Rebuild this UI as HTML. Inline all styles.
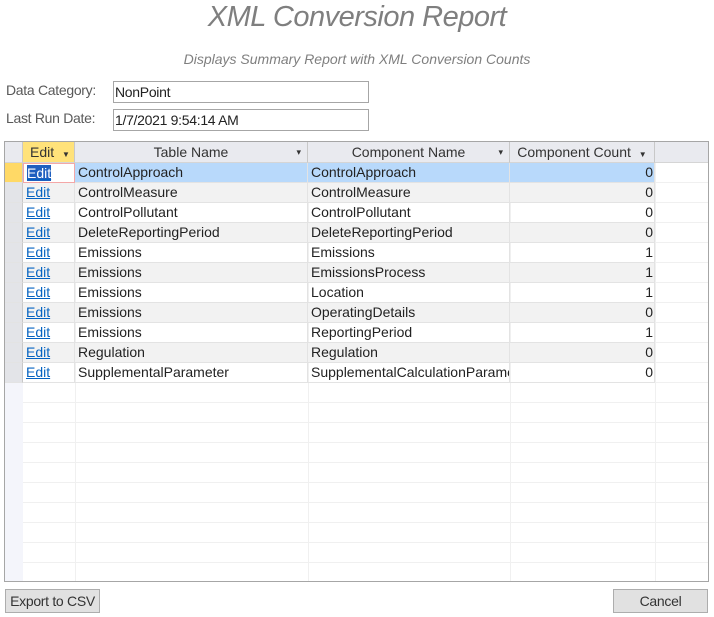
<!DOCTYPE html>
<html><head><meta charset="utf-8"><style>
body{margin:0;width:714px;height:617px;background:#fff;font-family:"Liberation Sans",sans-serif;position:relative;overflow:hidden;color:#222}
.a{position:absolute}
.title{left:0;width:714px;top:1px;text-align:center;font-size:29px;font-style:italic;color:#7f7f7f;letter-spacing:-0.5px}
.sub{left:0;width:714px;top:51px;text-align:center;font-size:14px;font-style:italic;color:#7f7f7f;letter-spacing:0}
.lbl{left:6px;font-size:14px;color:#595959;letter-spacing:-0.3px}
.inp{left:113px;width:256px;height:22px;border:1px solid #a6a6a6;font-size:14px;line-height:20px;padding-left:1px;box-sizing:border-box;letter-spacing:-0.3px}
.grid{left:4px;top:141px;width:705px;height:441px;border:1px solid #a6a6a6;box-sizing:border-box;
background:linear-gradient(#f4f5fb,#f4f5fb) 0 0/18px 100% no-repeat,repeating-linear-gradient(#fff 0 19px,#f0f0f0 19px 20px) 0 1px;overflow:hidden}
.hdr{top:0;height:21px;background:#e9eaef;border-bottom:1px solid #d5d5d5;box-sizing:border-box;font-size:14px;color:#333;line-height:20px;text-align:center;border-right:1px solid #c8c8c8}
.row{position:absolute;left:0;width:650px;height:20px;font-size:14px;line-height:19px}
.c{position:absolute;top:0;height:20px;border-right:1px solid #e3e3e3;border-bottom:1px solid #e3e3e3;box-sizing:border-box;padding-left:3px;white-space:nowrap;overflow:hidden;letter-spacing:0}
.s{left:0;width:18px;background:#e3e4e8;border-right:1px solid #c8c8c8}
.e{left:18px;width:52px;color:#0563c1;text-decoration:underline}
.t{left:70px;width:233px}
.n{left:303px;width:202px}
.k{left:505px;width:145px;text-align:right;padding-right:1px}
.g .c{background:#f2f2f2}
.g .s{background:#e3e4e8}
.vl{top:0;width:1px;height:440px;background:#f0f0f0}
.btn{top:589px;height:24px;border:1px solid #adadad;background:#e1e1e1;box-sizing:border-box;font-size:14px;line-height:22px;text-align:center;color:#333;letter-spacing:-0.3px}
</style></head><body>
<div class="a title">XML Conversion Report</div>
<div class="a sub">Displays Summary Report with XML Conversion Counts</div>
<div class="a lbl" style="top:82px">Data Category:</div>
<div class="a inp" style="top:81px">NonPoint</div>
<div class="a lbl" style="top:110px">Last Run Date:</div>
<div class="a inp" style="top:109px">1/7/2021 9:54:14 AM</div>
<div class="a grid">
<div class="a vl" style="left:70px"></div><div class="a vl" style="left:303px"></div><div class="a vl" style="left:505px"></div><div class="a vl" style="left:650px"></div>
<div class="a hdr" style="left:0;width:18px"></div>
<div class="a hdr" style="left:18px;width:52px;background:#ffe27a;text-align:left;padding-left:7px">Edit <span style="font-size:8px;margin-left:4px">▼</span></div>
<div class="a hdr" style="left:70px;width:233px">Table Name<span style="position:absolute;right:6px;font-size:9px">▾</span></div>
<div class="a hdr" style="left:303px;width:202px">Component Name<span style="position:absolute;right:6px;font-size:9px">▾</span></div>
<div class="a hdr" style="left:505px;width:145px">Component Count <span style="font-size:8px;margin-left:4px">▼</span></div>
<div class="a hdr" style="left:650px;width:55px;border-right:none"></div>

<div class="row" style="top:21px"><div class="c s" style="background:#ffd966"></div><div class="c e" style="background:#fff;border:1px solid #f4a7a7"><span style="background:#1f5fbf;color:#fff">Edit</span></div><div class="c t" style="background:#b8d9fb">ControlApproach</div><div class="c n" style="background:#b8d9fb">ControlApproach</div><div class="c k" style="background:#b8d9fb">0</div></div>
<div class="row g" style="top:41px"><div class="c s"></div><div class="c e">Edit</div><div class="c t">ControlMeasure</div><div class="c n">ControlMeasure</div><div class="c k">0</div></div>
<div class="row" style="top:61px"><div class="c s"></div><div class="c e">Edit</div><div class="c t">ControlPollutant</div><div class="c n">ControlPollutant</div><div class="c k">0</div></div>
<div class="row g" style="top:81px"><div class="c s"></div><div class="c e">Edit</div><div class="c t">DeleteReportingPeriod</div><div class="c n">DeleteReportingPeriod</div><div class="c k">0</div></div>
<div class="row" style="top:101px"><div class="c s"></div><div class="c e">Edit</div><div class="c t">Emissions</div><div class="c n">Emissions</div><div class="c k">1</div></div>
<div class="row g" style="top:121px"><div class="c s"></div><div class="c e">Edit</div><div class="c t">Emissions</div><div class="c n">EmissionsProcess</div><div class="c k">1</div></div>
<div class="row" style="top:141px"><div class="c s"></div><div class="c e">Edit</div><div class="c t">Emissions</div><div class="c n">Location</div><div class="c k">1</div></div>
<div class="row g" style="top:161px"><div class="c s"></div><div class="c e">Edit</div><div class="c t">Emissions</div><div class="c n">OperatingDetails</div><div class="c k">0</div></div>
<div class="row" style="top:181px"><div class="c s"></div><div class="c e">Edit</div><div class="c t">Emissions</div><div class="c n">ReportingPeriod</div><div class="c k">1</div></div>
<div class="row g" style="top:201px"><div class="c s"></div><div class="c e">Edit</div><div class="c t">Regulation</div><div class="c n">Regulation</div><div class="c k">0</div></div>
<div class="row" style="top:221px"><div class="c s"></div><div class="c e">Edit</div><div class="c t">SupplementalParameter</div><div class="c n">SupplementalCalculationParameter</div><div class="c k">0</div></div>
</div>
<div class="a btn" style="left:5px;width:95px">Export to CSV</div>
<div class="a btn" style="left:613px;width:95px">Cancel</div>
</body></html>
